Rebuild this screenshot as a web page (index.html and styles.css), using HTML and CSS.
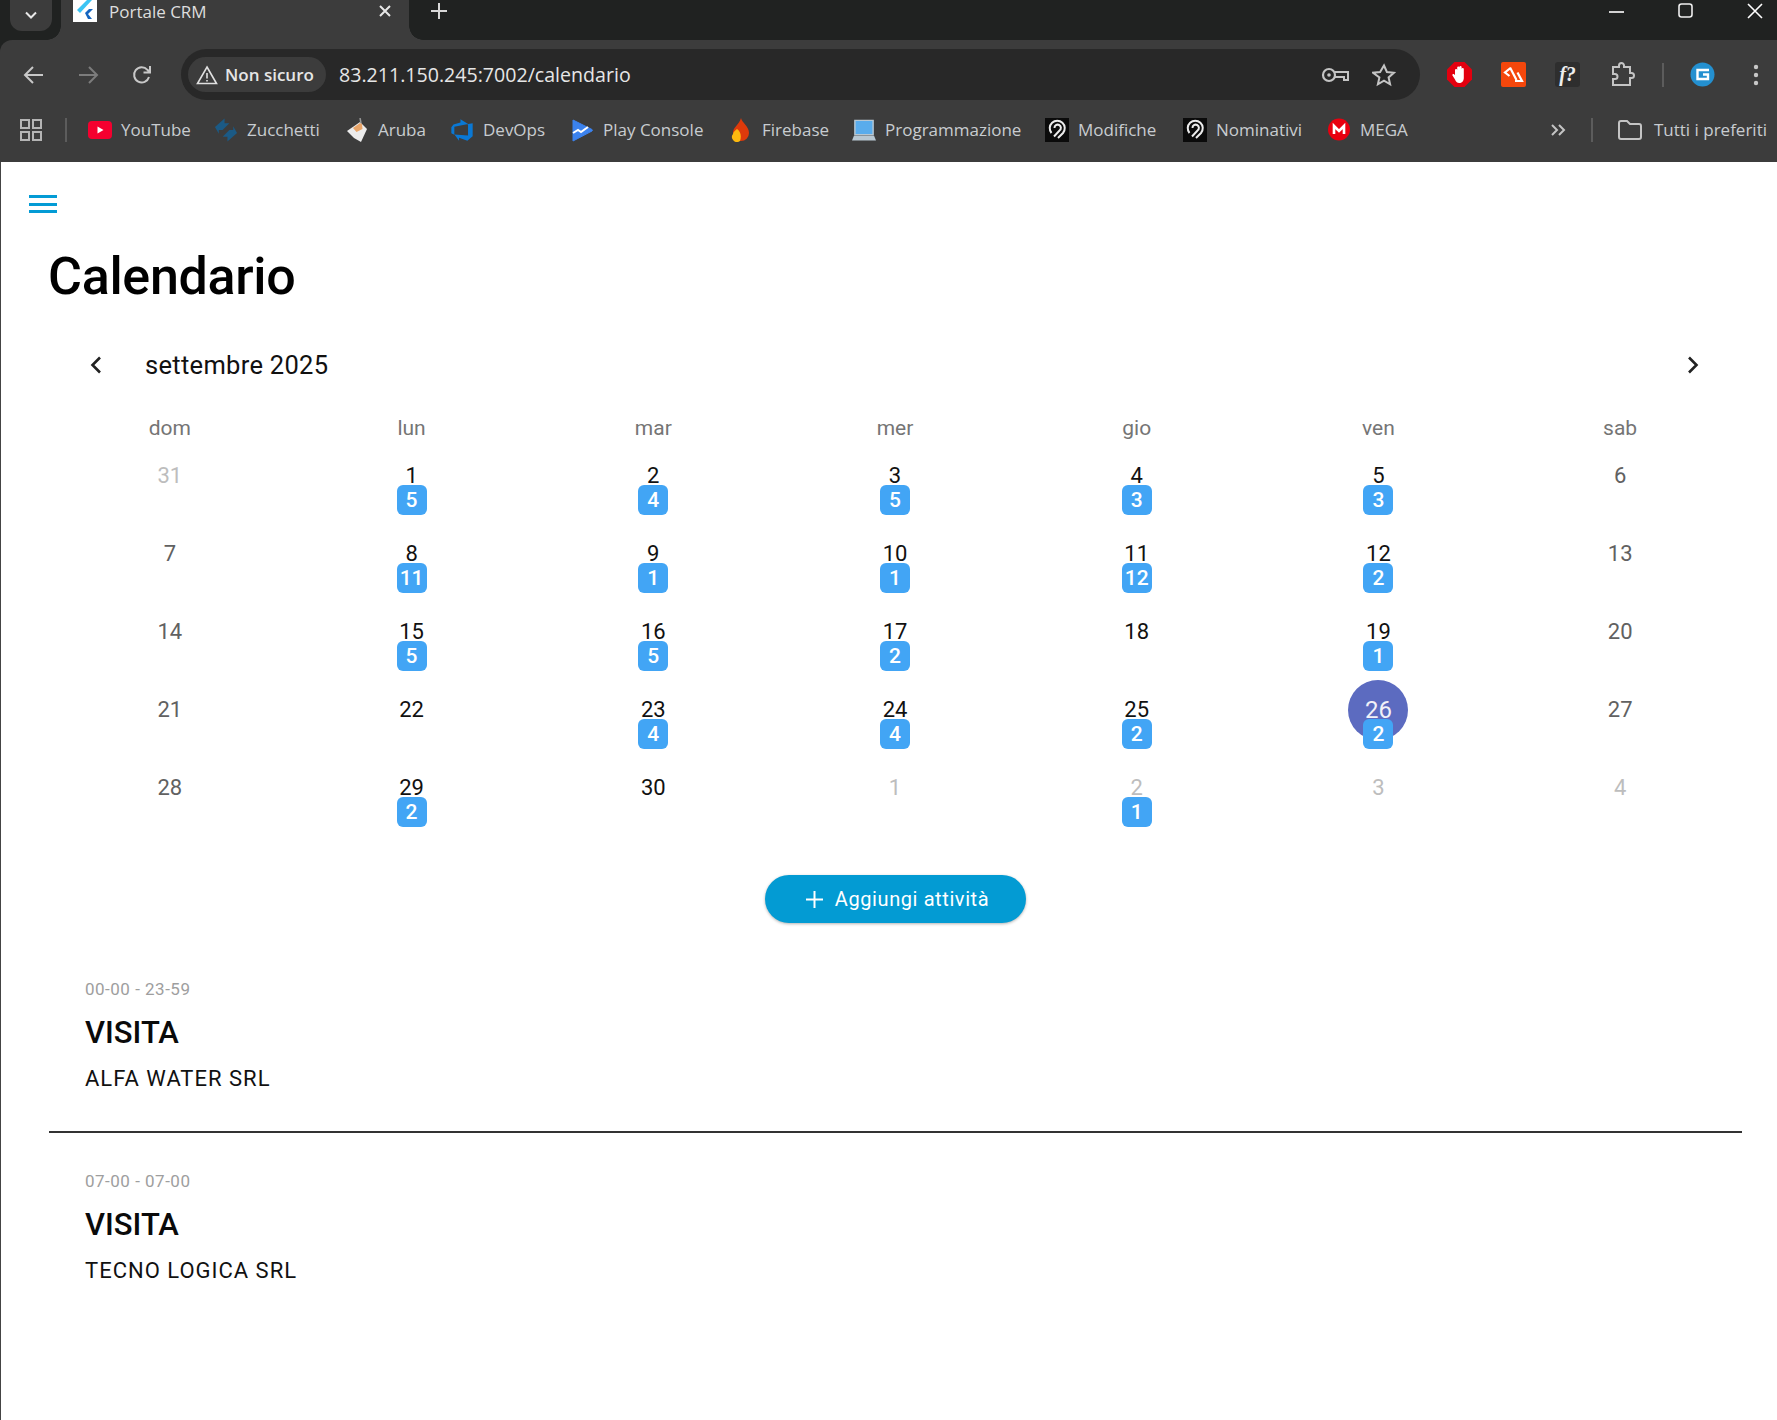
FILE: index.html
```html
<!DOCTYPE html>
<html lang="it">
<head>
    <meta charset="UTF-8">
    <meta name="viewport" content="width=device-width, initial-scale=1.0">
    <title>Portale CRM</title>
    <link rel="stylesheet" href="styles.css">
</head>
<body>
    <div class="chrome">
        <div class="tabstrip">
            <div class="tab-menu">
                <svg width="14" height="9" viewBox="0 0 14 9"><path d="M2 1.500l5 5 5-5" fill="none" stroke="#e8e8e8" stroke-width="2"/></svg>
            </div>
            <div class="tab">
                <div class="favicon">
                    <svg width="24" height="22" viewBox="0 0 24 22"><path d="M14 0L4 10l3 3L19 0z" fill="#3bc4f4"/><path d="M12 13l4-4h4l-5 5 4 5h-4z" fill="#1565c0"/></svg>
                </div>
                <span class="tab-title">Portale CRM</span>
                <svg class="tab-close" width="14" height="14" viewBox="0 0 14 14"><path d="M2 2l10 10M12 2L2 12" stroke="#e8e8e8" stroke-width="2"/></svg>
            </div>
            <svg class="tab-new" width="16" height="16" viewBox="0 0 16 16"><path d="M8 0v16M0 8h16" stroke="#d8d8d8" stroke-width="2"/></svg>
            <div class="win-btns">
                <svg width="16" height="16" viewBox="0 0 16 16"><path d="M0 9h15" stroke="#fff" stroke-width="1.600"/></svg>
                <svg width="16" height="16" viewBox="0 0 16 16"><rect x="1" y="1" width="13" height="13" rx="2.500" fill="none" stroke="#eee" stroke-width="1.600"/></svg>
                <svg width="16" height="16" viewBox="0 0 16 16"><path d="M1 1l14 14M15 1L1 15" stroke="#fff" stroke-width="1.600"/></svg>
            </div>
        </div>

        <div class="toolbar">
            <div class="nav-btns">
                <svg width="24" height="24" viewBox="0 0 24 24"><path d="M21 12H4M11 4l-8 8 8 8" fill="none" stroke="#c8c8c8" stroke-width="2"/></svg>
                <svg width="24" height="24" viewBox="0 0 24 24"><path d="M3 12h17M13 4l8 8-8 8" fill="none" stroke="#7c7c7c" stroke-width="2"/></svg>
                <svg width="24" height="24" viewBox="0 0 24 24"><path d="M19 14a7.600 7.600 0 1 1-1.600-7.200L20 9.500M20 3v6.500h-6.500" fill="none" stroke="#c8c8c8" stroke-width="2"/></svg>
            </div>
            <div class="omnibox">
                <div class="chip">
                    <svg width="22" height="20" viewBox="0 0 22 20"><path d="M11 2l9.500 16.500h-19zM11 8v5.500M11 15v1.600" fill="none" stroke="#e0e0e0" stroke-width="1.600"/></svg>
                    <span>Non sicuro</span>
                </div>
                <span class="url">83.211.150.245:7002/calendario</span>
                <div class="omni-right">
                    <svg width="28" height="18" viewBox="0 0 28 18"><circle cx="8" cy="9" r="6" fill="none" stroke="#c4c4c4" stroke-width="2.200"/><circle cx="8" cy="9" r="1.800" fill="#c4c4c4"/><path d="M14 6h13v8h-4v-3h-9" fill="none" stroke="#c4c4c4" stroke-width="2"/></svg>
                    <svg width="24" height="24" viewBox="0 0 24 24"><path d="M12 2.500l2.900 6.500 7 .7-5.300 4.700 1.500 6.900-6.100-3.600-6.100 3.600 1.500-6.900L1.100 9.700l7-.7z" fill="none" stroke="#c4c4c4" stroke-width="2"/></svg>
                </div>
            </div>
            <div class="ext-btns">
                <svg width="25" height="25" viewBox="0 0 25 25"><path d="M7.500 0h10l7.500 7.500v10L17.500 25h-10L0 17.500v-10z" fill="#e3000f"/><path d="M8 13V8a1.100 1.100 0 0 1 2.200 0V5.500a1.100 1.100 0 0 1 2.200 0V5a1.100 1.100 0 0 1 2.200 0v2a1.100 1.100 0 0 1 2.200 0v9c0 3-2 5-4.500 5S9 19.500 8 17.500L5.500 13.500c-.6-1.400 1-2 1.800-1z" fill="#fff"/></svg>
                <svg width="25" height="25" viewBox="0 0 25 25"><rect width="25" height="25" rx="2" fill="#f4470c"/><path d="M9.500 6L4 10.500l4.500 3.500M9 5.500l6.500 12.500M16.500 10.500l4.500 8.500h-7" fill="none" stroke="#fff" stroke-width="2.200"/></svg>
                <div class="ext-font">f?</div>
                <svg class="ext-puzzle" width="25" height="25" viewBox="0 0 25 25"><path d="M2 5h6V3.500a2.500 2.500 0 0 1 5 0V5h6v6h1.500a2.500 2.500 0 0 1 0 5H19v7H2v-6h2a2.500 2.500 0 0 0 0-5H2z" fill="none" stroke="#c4c4c4" stroke-width="2"/></svg>
                <span class="tool-sep"></span>
                <svg width="25" height="25" viewBox="0 0 25 25"><circle cx="12.500" cy="12.500" r="12" fill="#2490d0"/><path d="M19 8H7.500v9H18v-4.500h-5" fill="none" stroke="#fff" stroke-width="2.400"/></svg>
                <svg class="dots" width="6" height="22" viewBox="0 0 6 22"><circle cx="3" cy="3" r="2.200" fill="#c8c8c8"/><circle cx="3" cy="11" r="2.200" fill="#c8c8c8"/><circle cx="3" cy="19" r="2.200" fill="#c8c8c8"/></svg>
            </div>
        </div>

        <div class="bookmarks">
            <svg class="apps" width="22" height="22" viewBox="0 0 22 22"><g fill="none" stroke="#b4b4b4" stroke-width="2"><rect x="1" y="1" width="8" height="8"/><rect x="13" y="1" width="8" height="8"/><rect x="1" y="13" width="8" height="8"/><rect x="13" y="13" width="8" height="8"/></g></svg>
            <span class="bar-sep"></span>
            <div class="bm-list">
                <a class="bm"><svg width="24" height="18" viewBox="0 0 24 18"><rect width="24" height="18" rx="4" fill="#f5002f"/><path d="M9.500 5.500l6 3.500-6 3.500z" fill="#fff"/></svg>YouTube</a>
                <a class="bm"><svg width="24" height="24" viewBox="0 0 25 24"><g fill="#1b5a85"><path d="M1 9l10-9v5h5l-7 7H5v4z"/><path d="M24 15l-10 9v-5H9l7-7h4V8z"/></g></svg>Zucchetti</a>
                <a class="bm"><svg width="24" height="24" viewBox="0 0 24 24"><path d="M2 13L15 4l7 7-6 13-7-4z" fill="#ececec"/><path d="M8 10l7-5 2 1 .5 5-6 3z" fill="#e8a468"/><path d="M15 0l1 5" stroke="#999" stroke-width="1.500"/></svg>Aruba</a>
                <a class="bm"><svg width="24" height="24" viewBox="0 0 18 18"><path d="M17 4v9.740l-4 3.280-6.200-2.260V17L3.290 12.410l10.230.8V4.440zm-3.410.49L7.850 1v2.290L2.580 4.840 1 6.870v4.610l2.260 1V6.570z" fill="#0a78d4"/></svg>DevOps</a>
                <a class="bm"><svg width="24" height="24" viewBox="0 0 24 24"><path d="M3 2l19 9.500a1 1 0 0 1 0 1.500L3 23z" fill="#3b82ee" stroke="#3b82ee" stroke-linejoin="round"/><path d="M3 15l5-3 3 2 7-5" fill="none" stroke="#fff" stroke-width="2"/></svg>Play Console</a>
                <a class="bm"><svg width="24" height="24" viewBox="0 0 18 24"><path d="M9 0c1 5 8 8 8 15a8 8 0 0 1-16 0C1 9 7 7 9 0z" fill="#dd3a0b"/><path d="M5 11c3 2 5 6 3 12a5 5 0 0 1-7-7c0-2 2-3 4-5z" fill="#fcb90f"/></svg>Firebase</a>
                <a class="bm"><svg width="24" height="22" viewBox="0 0 25 22"><path d="M3 1h19v15H3z" fill="#59acec" stroke="#b7c7d2" stroke-width="1.500"/><path d="M2 17h21l2 5H0z" fill="#b7c7d2"/></svg>Programmazione</a>
                <a class="bm"><svg width="24" height="24" viewBox="0 0 24 24"><rect width="24" height="24" fill="#0b0b0b"/><path d="M6.500 15A7.500 7.500 0 1 1 18 15l-5 5M9 18.500l5.500-6a3.200 3.200 0 1 0-5-2.500" fill="none" stroke="#ececec" stroke-width="2"/></svg>Modifiche</a>
                <a class="bm"><svg width="24" height="24" viewBox="0 0 24 24"><rect width="24" height="24" fill="#0b0b0b"/><path d="M6.500 15A7.500 7.500 0 1 1 18 15l-5 5M9 18.500l5.500-6a3.200 3.200 0 1 0-5-2.500" fill="none" stroke="#ececec" stroke-width="2"/></svg>Nominativi</a>
                <a class="bm"><svg width="24" height="23" viewBox="0 0 22 23"><circle cx="11" cy="11.500" r="11" fill="#e8000f"/><path d="M6 16V8l5 5 5-5v8" fill="none" stroke="#fff" stroke-width="2.600"/></svg>MEGA</a>
            </div>
            <div class="bm-end">
                <svg width="15" height="14" viewBox="0 0 15 14"><path d="M1 2l5 5-5 5M8 2l5 5-5 5" fill="none" stroke="#c4c4c4" stroke-width="2"/></svg>
                <span class="bar-sep"></span>
                <a class="bm"><svg width="24" height="20" viewBox="0 0 24 20"><path d="M1 3a2 2 0 0 1 2-2h6l3 3h9a2 2 0 0 1 2 2v11a2 2 0 0 1-2 2H3a2 2 0 0 1-2-2z" fill="none" stroke="#c4c4c4" stroke-width="2"/></svg>Tutti i preferiti</a>
            </div>
        </div>
    </div>

    <div class="page">
        <div class="menu-btn"><span></span><span></span><span></span></div>
        <h1 class="page-title">Calendario</h1>

        <div class="cal">
            <div class="cal-head">
                <svg width="14" height="20" viewBox="0 0 14 20"><path d="M11 2.500L3.500 10l7.500 7.500" fill="none" stroke="#222" stroke-width="2.600"/></svg>
                <span class="cal-month">settembre 2025</span>
                <svg class="cal-next" width="14" height="20" viewBox="0 0 14 20"><path d="M3 2.500l7.500 7.500L3 17.500" fill="none" stroke="#222" stroke-width="2.600"/></svg>
            </div>
            <div class="cal-week">
                <span>dom</span><span>lun</span><span>mar</span><span>mer</span><span>gio</span><span>ven</span><span>sab</span>
            </div>
            <div class="cal-grid">
                <div class="day out"><span class="num">31</span></div>
                <div class="day"><span class="num">1</span><span class="badge">5</span></div>
                <div class="day"><span class="num">2</span><span class="badge">4</span></div>
                <div class="day"><span class="num">3</span><span class="badge">5</span></div>
                <div class="day"><span class="num">4</span><span class="badge">3</span></div>
                <div class="day"><span class="num">5</span><span class="badge">3</span></div>
                <div class="day end"><span class="num">6</span></div>

                <div class="day end"><span class="num">7</span></div>
                <div class="day"><span class="num">8</span><span class="badge">11</span></div>
                <div class="day"><span class="num">9</span><span class="badge">1</span></div>
                <div class="day"><span class="num">10</span><span class="badge">1</span></div>
                <div class="day"><span class="num">11</span><span class="badge">12</span></div>
                <div class="day"><span class="num">12</span><span class="badge">2</span></div>
                <div class="day end"><span class="num">13</span></div>

                <div class="day end"><span class="num">14</span></div>
                <div class="day"><span class="num">15</span><span class="badge">5</span></div>
                <div class="day"><span class="num">16</span><span class="badge">5</span></div>
                <div class="day"><span class="num">17</span><span class="badge">2</span></div>
                <div class="day"><span class="num">18</span></div>
                <div class="day"><span class="num">19</span><span class="badge">1</span></div>
                <div class="day end"><span class="num">20</span></div>

                <div class="day end"><span class="num">21</span></div>
                <div class="day"><span class="num">22</span></div>
                <div class="day"><span class="num">23</span><span class="badge">4</span></div>
                <div class="day"><span class="num">24</span><span class="badge">4</span></div>
                <div class="day"><span class="num">25</span><span class="badge">2</span></div>
                <div class="day today"><span class="num">26</span><span class="badge">2</span></div>
                <div class="day end"><span class="num">27</span></div>

                <div class="day end"><span class="num">28</span></div>
                <div class="day"><span class="num">29</span><span class="badge">2</span></div>
                <div class="day"><span class="num">30</span></div>
                <div class="day out"><span class="num">1</span></div>
                <div class="day out"><span class="num">2</span><span class="badge">1</span></div>
                <div class="day out"><span class="num">3</span></div>
                <div class="day out"><span class="num">4</span></div>
            </div>
        </div>

        <div class="add-wrap">
            <button class="add-btn">
                <svg width="17" height="17" viewBox="0 0 17 17"><path d="M8.500 0v17M0 8.500h17" stroke="#fff" stroke-width="2"/></svg>
                Aggiungi attività
            </button>
        </div>

        <div class="event">
            <div class="event-time">00-00 - 23-59</div>
            <div class="event-type">VISITA</div>
            <div class="event-client">ALFA WATER SRL</div>
        </div>
        <div class="divider"></div>
        <div class="event">
            <div class="event-time">07-00 - 07-00</div>
            <div class="event-type">VISITA</div>
            <div class="event-client">TECNO LOGICA SRL</div>
        </div>
    </div>
</body>
</html>
```

FILE: styles.css
```css
* {
    margin: 0;
    padding: 0;
    box-sizing: border-box;
}

html, body {
    height: 100%;
}

body {
    width: 1777px;
    height: 1420px;
    overflow: hidden;
    background: white;
    font-family: Roboto, sans-serif;
    display: flex;
    flex-direction: column;
}

svg {
    flex: none;
    display: block;
}

.chrome {
    flex: none;
    background: #202221;
}

/* tab strip */
.tabstrip {
    height: 40px;
    display: flex;
    align-items: flex-start;
    padding-left: 10px;
}

.tab-menu {
    width: 42px;
    height: 31px;
    background: #3c3c3c;
    border-radius: 0 0 12px 12px;
    display: flex;
    align-items: center;
    justify-content: center;
}

.tab {
    position: relative;
    width: 348px;
    height: 40px;
    margin-left: 9px;
    background: #3c3c3c;
    display: flex;
    align-items: flex-start;
    padding-left: 12px;
}

/* the flared feet of the active tab */
.tab::before,
.tab::after {
    content: "";
    position: absolute;
    bottom: 0;
    width: 14px;
    height: 14px;
}

.tab::before {
    left: -14px;
    background: radial-gradient(circle at 0 0, transparent 13.500px, #3c3c3c 14px);
}

.tab::after {
    right: -14px;
    background: radial-gradient(circle at 100% 0, transparent 13.500px, #3c3c3c 14px);
}

.favicon {
    width: 24px;
    height: 22px;
    background: white;
}

.tab-title {
    margin-left: 12px;
    width: 269px;
    font-family: "Open Sans", sans-serif;
    font-size: 17px;
    line-height: 23px;
    color: #dedede;
}

.tab-close {
    margin-top: 4px;
}

.tab-new {
    margin-left: 22px;
    margin-top: 3px;
}

.win-btns {
    margin-left: auto;
    display: flex;
    gap: 53px;
    padding: 3px 14px 0 0;
}

/* toolbar */
.toolbar {
    height: 60px;
    background: #3c3c3c;
    border-radius: 12px 0 0 0;
    display: flex;
    align-items: center;
    padding-left: 22px;
}

.nav-btns {
    display: flex;
    gap: 30px;
    margin-top: 9px;
}

.omnibox {
    width: 1239px;
    height: 51px;
    margin: 9px 0 0 27px;
    background: #282828;
    border-radius: 26px;
    display: flex;
    align-items: center;
    padding: 0 24px 0 7px;
}

.chip {
    width: 138px;
    height: 35px;
    background: #3c3c3c;
    border-radius: 18px;
    display: flex;
    align-items: center;
    gap: 7px;
    padding-left: 8px;
    font-family: "Open Sans", sans-serif;
    font-weight: 600;
    font-size: 17px;
    color: #e6e6e6;
}

.url {
    margin-left: 13px;
    font-family: "Open Sans", sans-serif;
    font-size: 19.600px;
    color: #e6e6e6;
}

.omni-right {
    margin-left: auto;
    display: flex;
    align-items: center;
    gap: 23px;
}

.ext-btns {
    display: flex;
    align-items: center;
    margin: 9px 0 0 27px;
    gap: 29px;
}

.ext-font {
    width: 25px;
    height: 25px;
    background: #2e2e2e;
    border-radius: 3px;
    color: #eee;
    font-family: "Liberation Serif", serif;
    font-style: italic;
    font-weight: bold;
    font-size: 20px;
    line-height: 25px;
    text-align: center;
}

.ext-puzzle {
    margin-left: 2px;
}

.tool-sep {
    width: 2px;
    height: 24px;
    background: #5c5c5c;
    margin: 0 -3px;
}

.dots {
    margin-left: 9px;
}

/* bookmarks bar */
.bookmarks {
    height: 62px;
    background: #3c3c3c;
    display: flex;
    align-items: center;
    padding: 0 0 3px 20px;
    font-family: "Open Sans", sans-serif;
    font-size: 17px;
    color: #c8ccd0;
}

.bar-sep {
    width: 2px;
    height: 24px;
    background: #5c5c5c;
}

.apps + .bar-sep {
    margin-left: 23px;
}

.bm-list {
    display: grid;
    grid-template-columns: 126px 131px 105px 120px 159px 123px 193px 138px 144px auto;
    align-items: center;
    margin-left: 21px;
}

.bm {
    display: flex;
    align-items: center;
    gap: 9px;
    white-space: nowrap;
}

.bm-end {
    margin-left: auto;
    padding-right: 10px;
    display: flex;
    align-items: center;
    gap: 25px;
}

.bm-end .bm {
    gap: 12px;
}

/* page */
.page {
    flex: 1;
    border-left: 1px solid #444;
    padding: 0 35px 0 48px;
}

.menu-btn {
    width: 28px;
    height: 18px;
    margin: 33px 0 0 -20px;
    display: flex;
    flex-direction: column;
    justify-content: space-between;
}

.menu-btn span {
    height: 3px;
    background: #039bd5;
}

.page-title {
    margin: 33px 0 0 -1px;
    font-size: 52px;
    line-height: 62px;
    font-weight: 500;
    letter-spacing: -0.300px;
    color: #000;
}

.cal {
    margin-right: 1px;
}

.cal-head {
    display: flex;
    align-items: center;
    height: 40px;
    margin-top: 37px;
    padding: 0 41px 0 40px;
    font-size: 25.500px;
    color: #111;
}

.cal-month {
    margin-left: 42px;
    letter-spacing: 0.300px;
}

.cal-next {
    margin-left: auto;
}

.cal-week {
    display: grid;
    grid-template-columns: repeat(7, 1fr);
    margin-top: 31px;
    text-align: center;
    font-size: 21px;
    line-height: 24px;
    color: #757575;
}

.cal-grid {
    display: grid;
    grid-template-columns: repeat(7, 1fr);
    grid-auto-rows: 78px;
    margin-top: 24px;
}

.day {
    display: flex;
    flex-direction: column;
    align-items: center;
    font-size: 22px;
    color: #111;
}

.day.end {
    color: #616161;
}

.day.out {
    color: #bdbdbd;
}

.num {
    position: relative;
    z-index: 1;
    height: 24px;
    line-height: 24px;
}

.today .num {
    color: #f1f1f8;
    font-size: 24px;
}

.today .num::before {
    content: "";
    position: absolute;
    z-index: -1;
    left: 50%;
    top: 50%;
    width: 60px;
    height: 60px;
    margin: -30px 0 0 -30px;
    background: #5c6bc0;
    border-radius: 50%;
}

.badge {
    position: relative;
    z-index: 2;
    min-width: 30px;
    height: 30px;
    margin-top: -3px;
    background: #42a5f5;
    border-radius: 6px;
    color: white;
    font-size: 21px;
    font-weight: 500;
    line-height: 30px;
    text-align: center;
}

.add-wrap {
    display: flex;
    justify-content: center;
    margin-top: 21px;
}

.add-btn {
    width: 261px;
    height: 48px;
    border: none;
    border-radius: 24px;
    padding-left: 4px;
    background: #039bd3;
    color: white;
    font-family: Roboto, sans-serif;
    font-size: 20px;
    font-weight: 400;
    letter-spacing: 0.600px;
    display: flex;
    align-items: center;
    justify-content: center;
    gap: 12px;
    box-shadow: 0 1px 3px rgba(0,0,0,0.3);
}

.event {
    padding-left: 36px;
}

.add-wrap + .event {
    margin-top: 54px;
}

.event-time {
    font-size: 17px;
    line-height: 24px;
    letter-spacing: 0.500px;
    color: #9e9e9e;
}

.event-type {
    margin-top: 13px;
    font-size: 31px;
    line-height: 38px;
    font-weight: 500;
    color: #0a0a0a;
}

.event-client {
    margin-top: 13px;
    font-size: 22px;
    line-height: 28px;
    letter-spacing: 1px;
    color: #111;
}

.divider {
    height: 2px;
    margin: 38px 0 36px;
    background: #333;
}
```
